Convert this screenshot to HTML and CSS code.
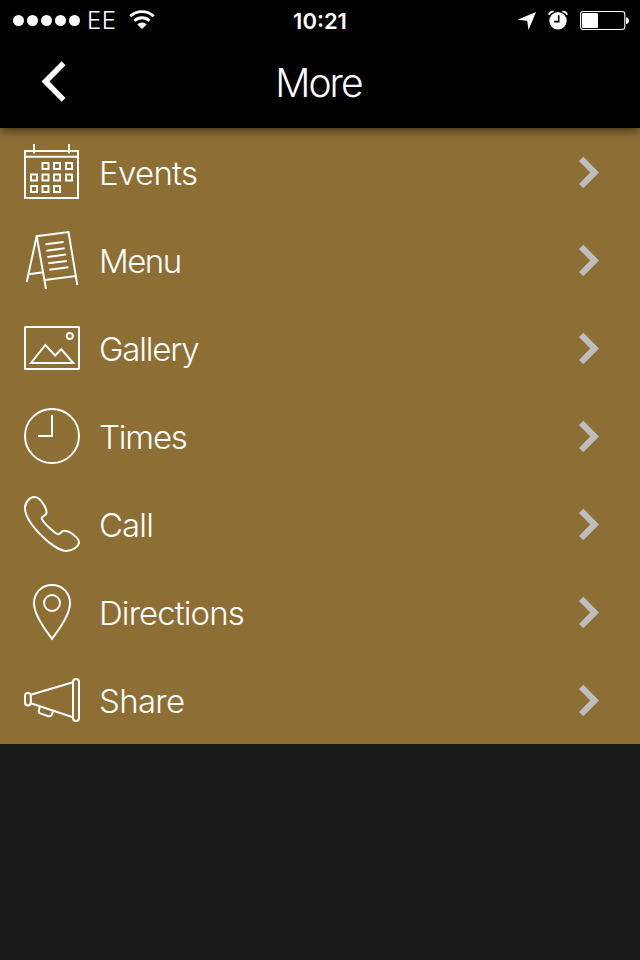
FILE: index.html
```html
<!DOCTYPE html>
<html lang="en">

<head>
    <meta charset="UTF-8">
    <meta name="viewport" content="width=device-width, initial-scale=1.0">
    <title>More</title>
    <link rel="stylesheet" href="styles.css">
</head>

<body>

    <header class="header">
        <div class="status-bar">
            <div class="status-left">
                <div class="signal">
                    <span></span><span></span><span></span><span></span><span></span>
                </div>
                <span class="carrier">EE</span>
                <svg class="wifi" width="26" height="20" viewBox="0 0 26 20">
                    <path d="M1.3 6.2a17 17 0 0 1 23.4 0M5.4 10.8a11 11 0 0 1 15.2 0" fill="none" stroke="#fff" stroke-width="2.8" />
                    <path d="M13 19L8.3 14.4a6.8 6.8 0 0 1 9.4 0z" fill="#fff" />
                </svg>
            </div>
            <span class="time">10:21</span>
            <div class="status-right">
                <svg width="20" height="20" viewBox="0 0 20 20">
                    <path d="M20 2L12.5 20L11.2 10.8L1.5 9.8z" fill="#fff" />
                </svg>
                <svg class="alarm" width="20" height="20" viewBox="0 0 20 20">
                    <circle cx="10" cy="10.8" r="8.7" fill="#fff" />
                    <path d="M1 4.9a4 4 0 0 1 4.6-3.2M19 4.9a4 4 0 0 0-4.6-3.2" fill="none" stroke="#fff" stroke-width="1.8" />
                    <path d="M10.7 5.3v6.3H6.2" fill="none" stroke="#000" stroke-width="1.6" />
                </svg>
                <svg class="battery" width="49" height="20" viewBox="0 0 49 20">
                    <rect x="0.6" y="1.5" width="44.2" height="18" rx="2.6" fill="none" stroke="#fff" stroke-width="1.1" />
                    <rect x="2" y="3" width="16" height="15" rx="1" fill="#fff" />
                    <path d="M46 7.2q3 .6 3 3.5t-3 3.5z" fill="#fff" />
                </svg>
            </div>
        </div>
        <div class="nav-bar">
            <a href="#" class="back" aria-label="Back">
                <svg width="24" height="42" viewBox="0 0 24 42">
                    <path d="M0.5 20.5L20.7 0.3L24.5 4.2L8.5 20.5L24.5 37L20.7 40.8z" fill="#fff" />
                </svg>
            </a>
            <h1>More</h1>
        </div>
    </header>

    <ul class="menu">
        <li>
            <svg class="icon" viewBox="0 0 56 56">
                <rect x="1" y="7" width="53" height="47" />
                <path d="M1 12.7H54M10 0V9.5M45 0V9.5" />
                <path d="M18.5 19h6v6h-6zM30 19h6v6h-6zM42 19h6v6h-6z" />
                <path d="M7 30.5h6v6h-6zM18.5 30.5h6v6h-6zM30 30.5h6v6h-6zM42 30.5h6v6h-6z" />
                <path d="M7 42h6v6h-6zM18.5 42h6v6h-6zM30 42h6v6h-6z" />
            </svg>
            <span class="label events">Events</span>
            <svg class="arrow" viewBox="0 0 20 32"><path d="M4.3 0.7L20 16.5L4.3 32.3L0 27.9L11.3 16.5L0 5.1z" /></svg>
        </li>
        <li>
            <svg class="icon" viewBox="0 0 56 56">
                <path d="M22 57L12.7 4.2L44.5 0L53.3 53M12.7 4.2L2.7 50M4.7 42.2L19.3 40.2M20.7 48L52 44" />
                <path d="M21.3 12.2L39.7 10M22.3 18.7L40.7 16.2M23.3 25L42 22.5M24.3 31.3L43 28.9M25.3 37.7L44.3 35.2" />
            </svg>
            <span class="label food">Menu</span>
            <svg class="arrow" viewBox="0 0 20 32"><path d="M4.3 0.7L20 16.5L4.3 32.3L0 27.9L11.3 16.5L0 5.1z" /></svg>
        </li>
        <li>
            <svg class="icon" viewBox="0 0 56 56">
                <rect x="1" y="7" width="54" height="42" rx="0.5" />
                <circle cx="45.8" cy="16" r="3" />
                <path d="M7 43L21.3 25L31.2 35.5L37.2 29.3L49.3 43z" />
            </svg>
            <span class="label">Gallery</span>
            <svg class="arrow" viewBox="0 0 20 32"><path d="M4.3 0.7L20 16.5L4.3 32.3L0 27.9L11.3 16.5L0 5.1z" /></svg>
        </li>
        <li>
            <svg class="icon" viewBox="0 0 56 56">
                <circle cx="28" cy="28" r="27" />
                <path d="M28 7V28H14" />
            </svg>
            <span class="label">Times</span>
            <svg class="arrow" viewBox="0 0 20 32"><path d="M4.3 0.7L20 16.5L4.3 32.3L0 27.9L11.3 16.5L0 5.1z" /></svg>
        </li>
        <li>
            <svg class="icon" viewBox="0 0 56 56">
                <path d="M10.5 1C6 1 1 6 1 12C1 27 30 55 42.5 55C49 55 55 50 55 46.3C55 42 46 34.8 40 34.8C37 34.8 37 38.3 34 38.3C31 37.5 18 25.5 17.6 22.3C17.6 20 22.6 19.5 22.6 16.5C22.6 11.5 16 1 10.5 1z" />
            </svg>
            <span class="label call">Call</span>
            <svg class="arrow" viewBox="0 0 20 32"><path d="M4.3 0.7L20 16.5L4.3 32.3L0 27.9L11.3 16.5L0 5.1z" /></svg>
        </li>
        <li>
            <svg class="icon" viewBox="0 0 56 56">
                <path d="M28 54.8C23 48 10 32 10 19.2C10 8.5 18 1 28 1S46 8.5 46 19.2C46 32 33 48 28 54.8z" />
                <circle cx="28" cy="19" r="8" />
            </svg>
            <span class="label directions">Directions</span>
            <svg class="arrow" viewBox="0 0 20 32"><path d="M4.3 0.7L20 16.5L4.3 32.3L0 27.9L11.3 16.5L0 5.1z" /></svg>
        </li>
        <li>
            <svg class="icon" viewBox="0 0 56 56">
                <rect x="1" y="21" width="5.8" height="12.5" rx="2.9" />
                <rect x="49" y="7" width="6" height="42" rx="3" />
                <path d="M6.8 22.8L49 10.2M6.8 31.3L49 45.3" />
                <path d="M16 34.5L14.8 38.5Q14.3 40.6 16.2 41.4L24.5 44.2Q26.6 44.8 27.5 43L29.3 39" />
            </svg>
            <span class="label share">Share</span>
            <svg class="arrow" viewBox="0 0 20 32"><path d="M4.3 0.7L20 16.5L4.3 32.3L0 27.9L11.3 16.5L0 5.1z" /></svg>
        </li>
    </ul>

</body>

</html>
```
FILE: styles.css
```css
* {
    box-sizing: border-box;
}

body {
    margin: 0;
    min-height: 960px;
    background-color: #1a1a1a;
    color: #fff;
    font-family: Inter, "Liberation Sans", sans-serif;
    font-weight: 300;
}

.header {
    position: relative;
    height: 128px;
    background: #000;
    box-shadow: 0 2px 10px rgba(0, 0, 0, 0.6);
}

/* Status bar */
.status-bar {
    display: grid;
    grid-template-columns: 1fr auto 1fr;
    align-items: center;
    height: 40px;
    padding: 0 11px 0 13px;
}

.status-left,
.status-right,
.signal {
    display: flex;
    align-items: center;
}

.status-right {
    justify-content: flex-end;
}

.signal {
    gap: 3px;
}

.signal span {
    width: 11px;
    height: 11px;
    border-radius: 50%;
    background: #fff;
}

.carrier {
    margin-left: 7px;
    padding-top: 2px;
    font-size: 24px;
    line-height: 38px;
    letter-spacing: 0.5px;
}

.wifi {
    margin-left: 12px;
}

.time {
    padding-top: 2px;
    padding-right: 2px;
    font-size: 22px;
    font-weight: 600;
    line-height: 38px;
}

.alarm {
    margin-left: 12px;
}

.battery {
    margin-left: 12px;
}

/* Title bar */
.nav-bar {
    display: grid;
    grid-template-columns: 100px 1fr 100px;
    align-items: center;
    height: 84px;
}

.back {
    padding-left: 41px;
}

.back svg {
    display: block;
    overflow: visible;
}

h1 {
    margin: 0;
    padding-right: 3px;
    font-size: 39px;
    font-weight: 300;
    letter-spacing: -1.9px;
    text-align: center;
}

/* Menu list */
.menu {
    margin: 0;
    padding: 0;
    list-style: none;
    background-color: #8d6e35;
}

.menu li {
    display: flex;
    align-items: center;
    height: 88px;
    padding: 0 41px 0 24px;
}

.icon {
    width: 56px;
    height: 56px;
    overflow: visible;
    fill: none;
    stroke: #fff;
    stroke-width: 2;
}

.label {
    flex: 1;
    margin-left: 19px;
    padding-top: 1px;
    font-size: 33px;
    line-height: 40px;
    letter-spacing: -1.2px;
}

.label.events,
.label.share {
    letter-spacing: -0.7px;
}

.label.food {
    letter-spacing: -1.5px;
}

.label.call,
.label.directions {
    letter-spacing: -0.9px;
}

.arrow {
    width: 20px;
    height: 32px;
    overflow: visible;
    fill: #bfbdbe;
}
```
